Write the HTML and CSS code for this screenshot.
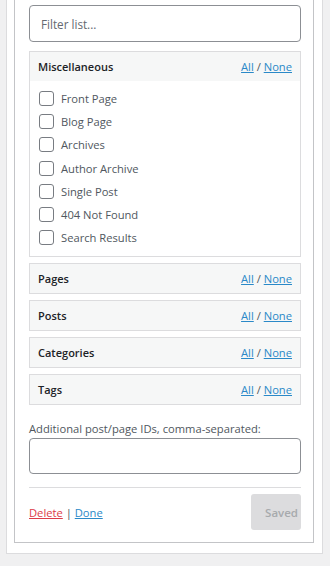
FILE: index.html
```html
<!DOCTYPE html>
<html>
<head>
    <title>Widget visibility</title>
    <link rel="stylesheet" href="styles.css">
</head>
<body>

    <div class="widget">
        <div class="widget-inside">

            <input type="text" class="filter" placeholder="Filter list...">

            <div class="group">
                <div class="group-head">
                    <span class="group-title">Miscellaneous</span>
                    <span class="toggle"><a href="#">All</a> / <a href="#">None</a></span>
                </div>
                <ul class="group-list">
                    <li><label><span class="check"></span>Front Page</label></li>
                    <li><label><span class="check"></span>Blog Page</label></li>
                    <li><label><span class="check"></span>Archives</label></li>
                    <li><label><span class="check"></span>Author Archive</label></li>
                    <li><label><span class="check"></span>Single Post</label></li>
                    <li><label><span class="check"></span>404 Not Found</label></li>
                    <li><label><span class="check"></span>Search Results</label></li>
                </ul>
            </div>

            <div class="group">
                <div class="group-head">
                    <span class="group-title">Pages</span>
                    <span class="toggle"><a href="#">All</a> / <a href="#">None</a></span>
                </div>
            </div>

            <div class="group">
                <div class="group-head">
                    <span class="group-title">Posts</span>
                    <span class="toggle"><a href="#">All</a> / <a href="#">None</a></span>
                </div>
            </div>

            <div class="group">
                <div class="group-head">
                    <span class="group-title">Categories</span>
                    <span class="toggle"><a href="#">All</a> / <a href="#">None</a></span>
                </div>
            </div>

            <div class="group">
                <div class="group-head">
                    <span class="group-title">Tags</span>
                    <span class="toggle"><a href="#">All</a> / <a href="#">None</a></span>
                </div>
            </div>

            <p class="ids-label">Additional post/page IDs, comma-separated:</p>
            <textarea class="ids"></textarea>

            <div class="controls">
                <div class="links"><a href="#" class="delete">Delete</a> | <a href="#" class="done">Done</a></div>
                <button class="saved" disabled>Saved</button>
            </div>

        </div>
    </div>

</body>
</html>
```

FILE: styles.css
```css
body { margin: 0; background: #f0f0f1; font-family: "Open Sans", sans-serif; font-size: 11.2px; color: #3c434a; }
.widget { width: 317px; box-sizing: border-box; margin-left: 6px; background: #fff; border: 1px solid #dcdcde; border-top: 0; padding: 0 8px 10px 7px; }
.widget-inside { border: 1px solid #c3c4c7; border-top: 0; padding: 5px 12px 12px 14px; }
.filter { display: block; width: 100%; box-sizing: border-box; height: 37px; margin: 0 0 9px; padding: 0 11px; border: 1px solid #8c8f94; border-radius: 4px; font-family: inherit; font-size: 11.7px; color: #2c3338; }
.filter::placeholder { color: #646970; }
.group { border: 1px solid #dcdcde; margin-bottom: 6px; background: #fff; }
.group-head { display: flex; justify-content: space-between; align-items: center; height: 29px; padding: 0 8px; background: #f6f7f7; }
.group-title { font-weight: 600; color: #1d2327; font-size: 11px; }
.toggle { color: #50575e; }
.toggle a { color: #2a89c8; text-decoration: underline; }
.group-list { list-style: none; margin: 0; padding: 6px 0 7px 9px; }
.group-list li { height: 23.2px; display: flex; align-items: center; }
.group-list label { display: flex; align-items: center; color: #50575e; }
.check { width: 13px; height: 13px; border: 1px solid #787c82; border-radius: 3px; margin-right: 7px; background: #fff; }
.ids-label { margin: 15px 0 0; line-height: 18px; color: #50575e; }
.ids { display: block; width: 100%; box-sizing: border-box; height: 36px; margin: 0; border: 1px solid #8c8f94; border-radius: 4px; resize: none; }
.controls { display: flex; justify-content: space-between; align-items: center; margin-top: 13px; padding-top: 6px; border-top: 1px solid #dcdcde; }
.links { color: #50575e; }
.links a { text-decoration: underline; }
.delete { color: #dc3c4a; }
.done { color: #2a89c8; }
.saved { width: 50px; height: 36px; padding: 0 3px 0 0; text-align: right; border: 0; border-radius: 3px; background: #dcdcde; color: #a7aaad; font-family: inherit; font-size: 11.5px; font-weight: 600; }
```
